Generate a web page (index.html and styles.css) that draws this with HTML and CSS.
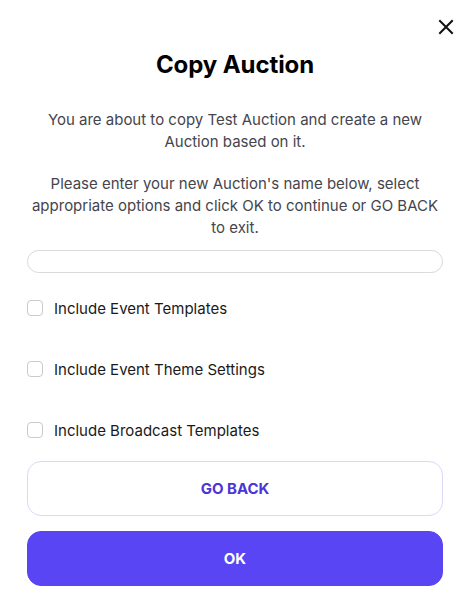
FILE: index.html
```html
<!DOCTYPE html>
<html>
<head>
<meta charset="utf-8">
<link rel="stylesheet" href="styles.css">
</head>
<body>
<div class="modal">
  <div class="topbar">
    <button class="close" aria-label="Close">
      <svg width="16" height="16" viewBox="0 0 16 16"><path d="M2 2L14 14M14 2L2 14" stroke="#111" stroke-width="2" stroke-linecap="square"/></svg>
    </button>
  </div>
  <h1 class="title">Copy Auction</h1>
  <p class="text">You are about to copy Test Auction and create a new Auction based on it.</p>
  <p class="text">Please enter your new Auction's name below, select appropriate options and click OK to continue or GO BACK to exit.</p>
  <input class="name-input" type="text">
  <div class="options">
    <label class="option"><span class="box"></span>Include Event Templates</label>
    <label class="option"><span class="box"></span>Include Event Theme Settings</label>
    <label class="option"><span class="box"></span>Include Broadcast Templates</label>
  </div>
  <div class="actions">
    <button class="btn btn-secondary">GO BACK</button>
    <button class="btn btn-primary">OK</button>
  </div>
</div>
</body>
</html>
```
FILE: styles.css
```css
* { box-sizing: border-box; }
html, body { margin: 0; padding: 0; background: #fff; }
body { font-family: Inter, "Noto Sans", sans-serif; color: #222; }
.modal {
  width: 474px;
  padding: 16px 31px 0 27px;
}
.topbar {
  display: flex;
  justify-content: flex-end;
  margin-right: -11px;
  height: 22px;
}
.close {
  border: 0;
  background: none;
  padding: 0;
  width: 16px;
  height: 16px;
  margin-top: 3px;
  display: flex;
}
.title {
  margin: 12px 0 0;
  text-align: center;
  font-size: 24px;
  font-weight: 700;
  line-height: 30px;
  color: #000;
  letter-spacing: -0.1px;
}
.text {
  margin: 29px 0 0;
  text-align: center;
  font-size: 15px;
  line-height: 22px;
  color: #45454d;
}
.text + .text { margin-top: 20px; }
.name-input {
  display: block;
  width: 100%;
  height: 23px;
  margin-top: 11px;
  border: 1px solid #d9d9de;
  border-radius: 12px;
  background: #fff;
  outline: none;
}
.options {
  display: flex;
  flex-direction: column;
  gap: 41px;
  margin-top: 25px;
}
.option {
  display: flex;
  align-items: center;
  gap: 11px;
  height: 20px;
  font-size: 15px;
  color: #1a1a1a;
}
.box {
  width: 16px;
  height: 16px;
  border: 1.5px solid #c9c9ce;
  border-radius: 4px;
}
.actions {
  display: flex;
  flex-direction: column;
  gap: 15px;
  margin-top: 21px;
}
.btn {
  width: 100%;
  height: 55px;
  border-radius: 14px;
  font-family: Inter, "Noto Sans", sans-serif;
  font-size: 15px;
  font-weight: 700;
}
.btn-secondary {
  background: #fff;
  border: 1px solid #dcd8f5;
  color: #4b35d6;
}
.btn-primary {
  background: #5a45f5;
  border: 1px solid #5a45f5;
  color: #fff;
}
```
